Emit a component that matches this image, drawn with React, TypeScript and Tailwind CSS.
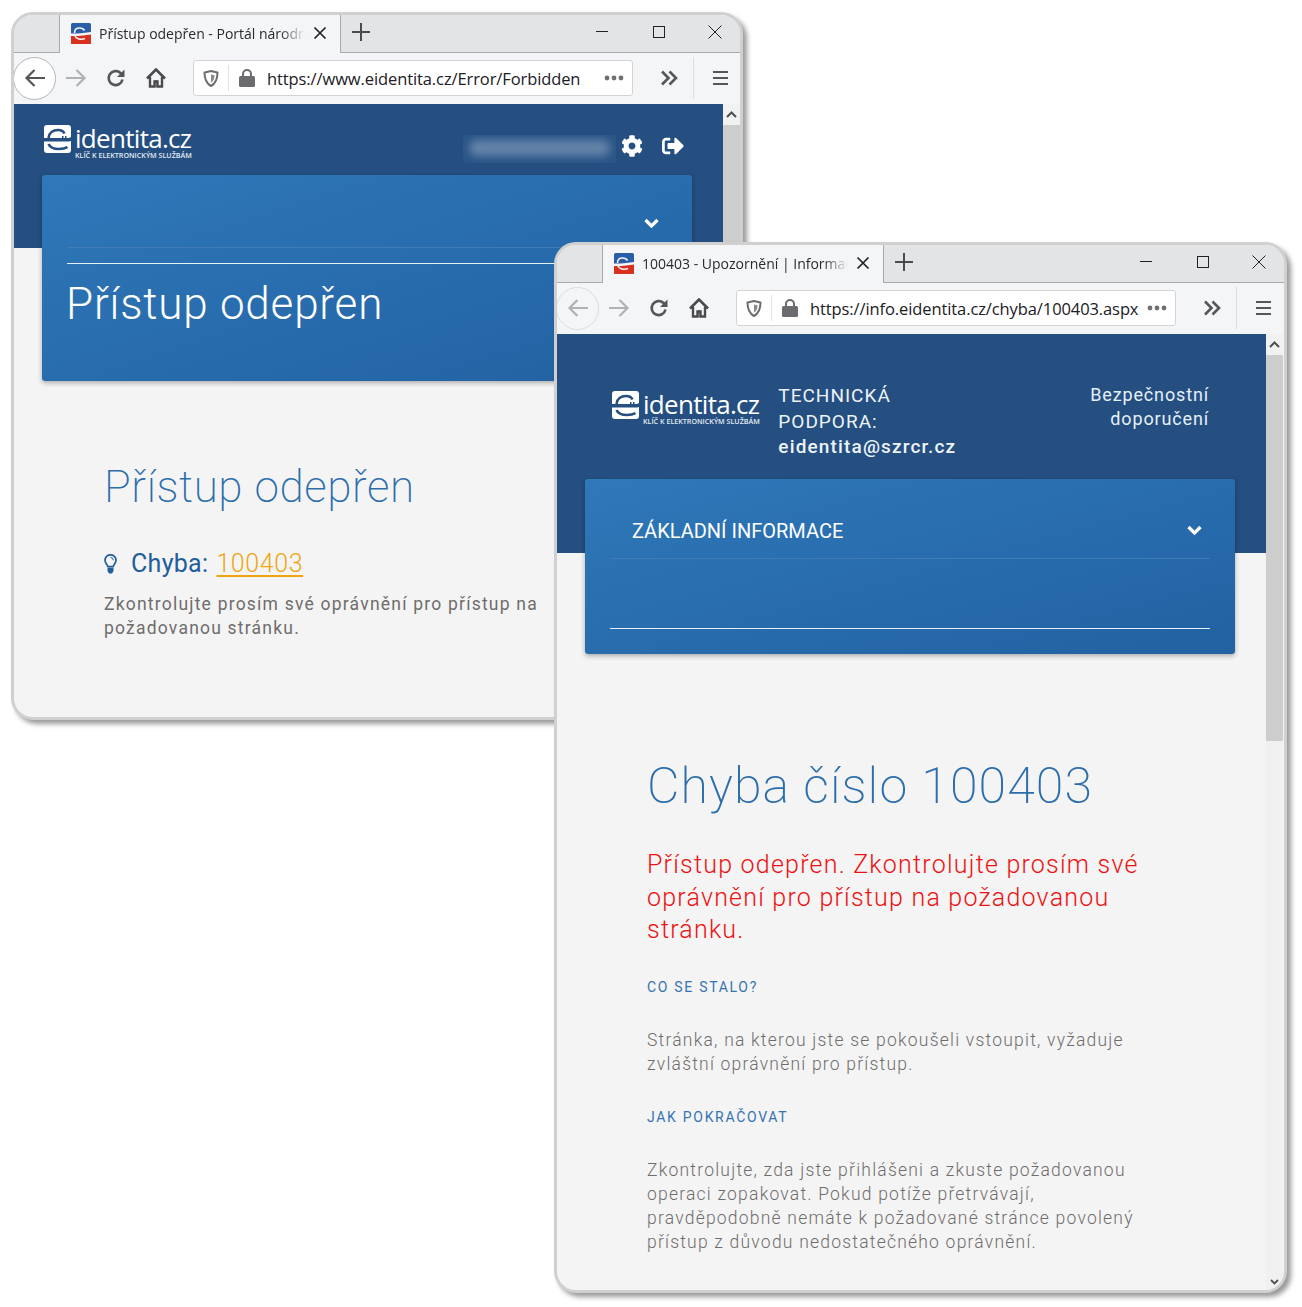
import React from 'react';
import { FaCog, FaSignOutAlt } from 'react-icons/fa';

const Favicon = () => (
  <svg width="20" height="21" viewBox="0 0 20 21" className="shrink-0">
    <rect width="20" height="21" rx="1.500" fill="#2a5ea8" />
    <path d="M0 11.500c4 1 7-1 11-.5s6 0 9-1V19.500a1.500 1.500 0 0 1-1.500 1.500h-17A1.500 1.500 0 0 1 0 19.500z" fill="#d7301f" />
    <path d="M0 10.500h7l5-.5 8-1v2.500l-8 1-5 .5H0z" fill="#f4f5f7" />
    <path d="M3.500 10c0-3.500 2.500-5 5-5s4 1 5 2.500M4 13c1 3 6 4 10 2.500" fill="none" stroke="#f4f5f7" strokeWidth="1.600" />
  </svg>
);

const TabClose = () => (
  <svg width="14" height="14" viewBox="0 0 14 14" className="shrink-0">
    <path d="M1.500 1.500l11 11M12.500 1.500l-11 11" stroke="#222" strokeWidth="1.700" />
  </svg>
);

const Plus = () => (
  <svg width="18" height="18" viewBox="0 0 18 18">
    <path d="M9 0v18M0 9h18" stroke="#4a4a4f" strokeWidth="2" />
  </svg>
);

const WindowButtons = () => (
  <div className="ml-auto flex items-center pb-[3px]">
    <svg width="12" height="12" viewBox="0 0 12 12" className="mr-[45px]"><path d="M0 5.500h12" stroke="#222" /></svg>
    <svg width="12" height="12" viewBox="0 0 12 12" className="mr-[43px]"><rect x=".5" y=".5" width="11" height="11" fill="none" stroke="#222" /></svg>
    <svg width="14" height="14" viewBox="0 0 14 14" className="mr-[18px]"><path d="M.5.5l13 13M13.500.5l-13 13" stroke="#222" /></svg>
  </div>
);

const Arrow = ({ color, flip }: { color: string; flip?: boolean }) => (
  <svg width="22" height="20" viewBox="0 0 22 20" className={flip ? 'rotate-180' : ''}>
    <path d="M21 10H3M10.500 2L2.500 10l8 8" fill="none" stroke={color} strokeWidth="2.200" />
  </svg>
);

const Reload = () => (
  <svg width="20" height="20" viewBox="0 0 20 20">
    <path d="M16.500 11.500a7 7 0 1 1-2-6.500l2.500 2.500" fill="none" stroke="#55555a" strokeWidth="2.600" />
    <path d="M18.500 1.500v7.500h-7.500z" fill="#55555a" />
  </svg>
);

const Home = () => (
  <svg width="20" height="20" viewBox="0 0 20 20">
    <path d="M1 10.500L10 1.500l9 9" fill="none" stroke="#4a4a4f" strokeWidth="2.600" />
    <path d="M4 9v9.500h4.500V13.500h3v5H16V9" fill="none" stroke="#4a4a4f" strokeWidth="2.400" />
    <rect x="8.500" y="12" width="3" height="7" fill="#4a4a4f" opacity=".45" />
  </svg>
);

const Shield = () => (
  <svg width="16" height="17" viewBox="0 0 16 17">
    <path d="M8 1l6.500 1.500c0 6-1 10.500-6.500 13.500C2.500 13 1.500 8.500 1.500 2.500z" fill="none" stroke="#6b6b70" strokeWidth="2" />
    <path d="M8 4.500l3.500.8c0 3-.8 5.500-3.500 7.500z" fill="#6b6b70" opacity=".8" />
  </svg>
);

const Lock = () => (
  <svg width="16" height="18" viewBox="0 0 16 18">
    <path d="M4 8V5a4 4 0 0 1 8 0v3" fill="none" stroke="#6b6b70" strokeWidth="2" />
    <rect y="7" width="16" height="11" rx="1.500" fill="#6b6b70" />
  </svg>
);

const Dots = () => (
  <svg width="20" height="6" viewBox="0 0 20 6" className="shrink-0">
    <circle cx="3" cy="3" r="2.400" fill="#6f6f74" /><circle cx="10" cy="3" r="2.400" fill="#6f6f74" /><circle cx="17" cy="3" r="2.400" fill="#6f6f74" />
  </svg>
);

const DoubleChevron = () => (
  <svg width="18" height="16" viewBox="0 0 18 16">
    <path d="M2 1.500L8.500 8 2 14.500M9.500 1.500L16 8l-6.500 6.500" fill="none" stroke="#55555a" strokeWidth="2.600" />
  </svg>
);

const Hamburger = () => (
  <svg width="15" height="16" viewBox="0 0 15 16">
    <path d="M0 2h15M0 8h15M0 14h15" stroke="#55555a" strokeWidth="2.200" />
  </svg>
);

const Bulb = () => (
  <svg width="13" height="20" viewBox="0 0 13 20" className="shrink-0">
    <path d="M3.800 12.500C3 10 1 9 1 6.300a5.500 5.500 0 0 1 11 0c0 2.700-2 3.700-2.800 6.200z" fill="none" stroke="#225d9c" strokeWidth="1.700" />
    <path d="M3.500 13.500h6v3.500l-1.500 2.500H5L3.500 17z" fill="#225d9c" />
    <path d="M6.500 3.500a2.800 2.800 0 0 1 2.800 2.800" fill="none" stroke="#225d9c" />
  </svg>
);

const Chevron = () => (
  <svg width="15" height="11" viewBox="0 0 15 11" className="shrink-0">
    <path d="M1.500 2l6 6 6-6" fill="none" stroke="#fff" strokeWidth="3.200" />
  </svg>
);

const Logo = () => (
  <div className="flex items-start">
    <svg width="28" height="29" viewBox="0 0 28 29" className="shrink-0">
      <rect width="27" height="28" rx="3" fill="#fff" />
      <path d="M4.500 13C5 8 9 5 14 5c3 0 5.500 1.200 6.500 3.500" fill="none" stroke="#244f80" strokeWidth="2.600" />
      <path d="M0 13h18v-2h1.500v2h1.500v-2h1.500v2H25l2-1v4l-2 .5H0z" fill="#244f80" />
      <path d="M4.500 19c1.500 3.500 6 5 10.500 5 3 0 6-.5 8.500-1.800" fill="none" stroke="#244f80" strokeWidth="2.600" />
    </svg>
    <div className="ml-[3px] flex flex-col">
      <span className="font-['Open_Sans',sans-serif] text-[26px] leading-[26px] tracking-[-0.7px] text-white">identita.cz</span>
      <span className="w-[116px] whitespace-nowrap font-['Open_Sans',sans-serif] text-[7.150px] font-semibold leading-[8px] text-[#e4ecf5]">KLÍČ K ELEKTRONICKÝM SLUŽBÁM</span>
    </div>
  </div>
);

const Chrome = ({ title, url, backActive }: { title: string; url: string; backActive: boolean }) => (
  <>
    <div className="flex h-[38px] shrink-0 border-b border-[#a9a9ad] bg-[#e3e4e6]">
      <div className="ml-[45px] mb-[-1px] flex w-[282px] items-center border-x border-[#a9a9ad] bg-[#f4f5f7] pb-[2px] pl-[11px] pr-[13px]">
        <Favicon />
        <span className="ml-[8px] w-[206px] overflow-hidden whitespace-nowrap font-['Open_Sans',sans-serif] text-[14px] text-[#2a2a2e] [mask-image:linear-gradient(90deg,#000_88%,transparent)]">{title}</span>
        <span className="ml-auto"><TabClose /></span>
      </div>
      <div className="ml-[11px] flex items-center pb-[3px]"><Plus /></div>
      <WindowButtons />
    </div>
    <div className="flex h-[51px] shrink-0 items-center bg-[#f4f5f7] pb-[1px]">
      <div className={`ml-[-1px] flex size-[43px] items-center justify-center rounded-full border ${backActive ? 'border-[#b4b4b6] bg-white' : 'border-[#dcdcde] bg-[#f4f5f7]'}`}>
        <Arrow color={backActive ? '#55555a' : '#b1b1b3'} />
      </div>
      <div className="ml-[9px]"><Arrow color="#b1b1b3" flip /></div>
      <div className="ml-[19px]"><Reload /></div>
      <div className="ml-[20px]"><Home /></div>
      <div className="ml-[27px] flex h-[36px] w-[440px] items-center rounded-[3px] border border-[#d4d4d6] bg-white">
        <div className="flex h-[26px] w-[35px] items-center justify-center border-r border-[#e2e2e4]"><Shield /></div>
        <div className="ml-[10px]"><Lock /></div>
        <span className="ml-[12px] whitespace-nowrap pt-[2px] font-['Open_Sans',sans-serif] text-[16.500px] tracking-[-0.1px] text-[#202024]">{url}</span>
        <div className="ml-auto mr-[8px]"><Dots /></div>
      </div>
      <div className="ml-[27px]"><DoubleChevron /></div>
      <div className="ml-[15px] h-[42px] w-px bg-[#dcdcde]" />
      <div className="ml-[19px]"><Hamburger /></div>
    </div>
  </>
);

const Scrollbar = ({ thumb }: { thumb: string }) => (
  <div className="flex w-[17px] shrink-0 flex-col bg-[#f0f0f0]">
    <div className="flex h-[21px] shrink-0 items-center justify-center bg-[#f1f1f1]">
      <svg width="11" height="7" viewBox="0 0 11 7"><path d="M1 6l4.500-4.500L10 6" fill="none" stroke="#505050" strokeWidth="2" /></svg>
    </div>
    <div className={`${thumb} w-full bg-[#cdcdcd]`} />
    <div className="mt-auto flex h-[17px] shrink-0 items-center justify-center">
      <svg width="9" height="6" viewBox="0 0 9 6"><path d="M1 1l3.500 3.500L8 1" fill="none" stroke="#505050" strokeWidth="1.800" /></svg>
    </div>
  </div>
);

const BlueCard = ({ className, children }: { className: string; children: React.ReactNode }) => (
  <div className={`relative w-[650px] rounded-[3px] bg-gradient-to-br from-[#2f78b9] to-[#2261a2] shadow-[0_2px_5px_rgba(0,0,0,0.3)] ${className}`}>
    {children}
  </div>
);

const BackWindow = () => (
  <div className="absolute left-[11px] top-[12px] isolate flex h-[708px] w-[732px] flex-col overflow-hidden rounded-[22px] border-[3px] border-[#d0d0d0] bg-[#f4f4f4] shadow-[4px_4px_5px_rgba(0,0,0,0.4)]">
    <Chrome title="Přístup odepřen - Portál národní identity" url="https://www.eidentita.cz/Error/Forbidden" backActive />
    <div className="flex min-h-0 flex-1">
      <div className="w-[709px] font-['Roboto',sans-serif]">
        <div className="flex h-[144px] items-start bg-[#244f80] pl-[30px] pt-[21px]">
          <Logo />
          <div className="ml-[272px] mt-[10px] h-[28px] w-[153px] overflow-hidden bg-[#2a5587] p-[4px]">
            <div className="mx-[2px] mt-[1px] h-[16px] rounded-full bg-[#6584a9] blur-[4px]" />
          </div>
          <FaCog className="ml-[5px] mt-[10px] text-[22px] text-white" />
          <FaSignOutAlt className="ml-[19px] mt-[10px] text-[22px] text-white" />
        </div>
        <BlueCard className="ml-[28px] mt-[-73px] h-[206px]">
          <div className="flex justify-end pr-[33px] pt-[43px]"><Chevron /></div>
          <div className="mx-[25px] mt-[18px] h-px bg-[#3f7cb5]" />
          <div className="mx-[25px] mt-[15px] h-px bg-[#e6f0f8]" />
          <h1 className="ml-[24px] mt-[12px] text-[44px] font-light leading-[56px] tracking-[0.800px] text-white">Přístup odepřen</h1>
        </BlueCard>
        <div className="pl-[90px] pt-[76px]">
          <h2 className="text-[44px] font-[200] leading-[60px] tracking-[0.600px] text-[#2c6dab]">Přístup odepřen</h2>
          <div className="mt-[30px] flex items-center text-[25px] leading-[34px] tracking-[0.300px] text-[#225d9c]">
            <Bulb />
            <span className="ml-[14px]">Chyba:</span>
            <a className="ml-[8px] font-light tracking-[0.600px] text-[#f0a50f] underline underline-offset-[3px]">100403</a>
          </div>
          <p className="mt-[11px] w-[450px] text-[17.500px] leading-[24px] tracking-[1.210px] text-[#6f6c6c]">Zkontrolujte prosím své oprávnění pro přístup na požadovanou stránku.</p>
        </div>
      </div>
      <Scrollbar thumb="flex-1" />
    </div>
  </div>
);

const FrontWindow = () => (
  <div className="absolute left-[554px] top-[242px] isolate flex h-[1051px] w-[733px] flex-col overflow-hidden rounded-[22px] border-[3px] border-[#d0d0d0] bg-[#f4f4f4] shadow-[4px_4px_5px_rgba(0,0,0,0.4)]">
    <Chrome title="100403 - Upozornění | Informace pro uživatele" url="https://info.eidentita.cz/chyba/100403.aspx" backActive={false} />
    <div className="flex min-h-0 flex-1">
      <div className="w-[709px] font-['Roboto',sans-serif]">
        <div className="flex h-[219px] items-start bg-[#244f80] pl-[55px] pr-[57px] pt-[57px]">
          <Logo />
          <div className="ml-[19px] mt-[-8px] w-[200px] text-[19px] leading-[25.600px] tracking-[1px] text-[#eef3f8]">
            <div>TECHNICKÁ</div>
            <div>PODPORA:</div>
            <div className="font-medium tracking-[1.150px]">eidentita@szrcr.cz</div>
          </div>
          <div className="ml-auto mt-[-8px] text-right text-[18px] leading-[24px] tracking-[0.850px] text-[#e6f0f8]">Bezpečnostní<br />doporučení</div>
        </div>
        <BlueCard className="ml-[28px] mt-[-74px] h-[175px]">
          <div className="flex items-center justify-between pl-[25px] pr-[33px] pt-[37px]">
            <span className="ml-[22px] text-[20px] leading-[30px] text-white">ZÁKLADNÍ INFORMACE</span>
            <div className="pb-[2px]"><Chevron /></div>
          </div>
          <div className="mx-[25px] mt-[12px] h-px bg-[#3f7cb5]" />
          <div className="mx-[25px] mt-[69px] h-px bg-[#e6f0f8]" />
        </BlueCard>
        <div className="pl-[90px] pt-[97px]">
          <h2 className="text-[50px] font-[200] leading-[70px] tracking-[1.100px] text-[#2c6dab]">Chyba číslo 100403</h2>
          <p className="mt-[28px] w-[510px] text-[25px] font-light leading-[32.500px] tracking-[1.220px] text-[#ee1111]">Přístup odepřen. Zkontrolujte prosím své oprávnění pro přístup na požadovanou stránku.</p>
          <h3 className="mt-[28px] text-[14px] leading-[24px] tracking-[1.700px] text-[#3673b0]">CO SE STALO?</h3>
          <p className="mt-[29px] w-[492px] text-[17.500px] font-light leading-[24px] tracking-[1.220px] text-[#6f6c6c]">Stránka, na kterou jste se pokoušeli vstoupit, vyžaduje zvláštní oprávnění pro přístup.</p>
          <h3 className="mt-[29px] text-[14px] leading-[24px] tracking-[1.700px] text-[#3673b0]">JAK POKRAČOVAT</h3>
          <p className="mt-[29px] w-[492px] text-[17.500px] font-light leading-[24px] tracking-[1.220px] text-[#6f6c6c]">Zkontrolujte, zda jste přihlášeni a zkuste požadovanou operaci zopakovat. Pokud potíže přetrvávají, pravděpodobně nemáte k požadované stránce povolený přístup z důvodu nedostatečného oprávnění.</p>
        </div>
      </div>
      <Scrollbar thumb="h-[386px]" />
    </div>
  </div>
);

export default function App() {
  return (
    <div className="relative h-[1307px] w-[1302px] overflow-hidden bg-white">
      <BackWindow />
      <FrontWindow />
    </div>
  );
}
